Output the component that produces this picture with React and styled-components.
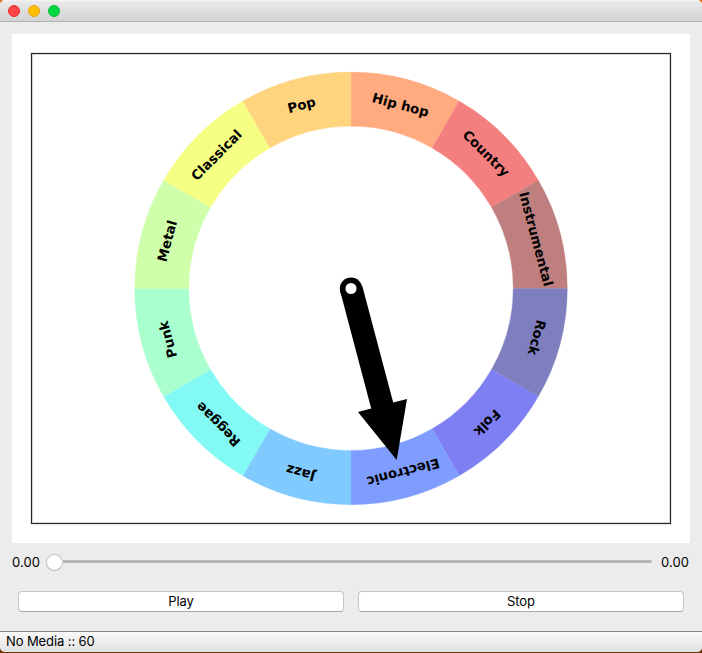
import React from 'react';
import styled, { createGlobalStyle } from 'styled-components';

const GlobalStyle = createGlobalStyle`
  * { box-sizing: border-box; }
  body { margin: 0; background: linear-gradient(#e8640a 0 50%, #6b3300 50%); }
`;

const Window = styled.div`
  width: 702px;
  height: 652px;
  margin-bottom: 1px;
  display: flex;
  flex-direction: column;
  overflow: hidden;
  border-radius: 5px;
  background: #ececec;
  color: #000;
  font-family: Inter, 'Liberation Sans', sans-serif;
  font-size: 13px;
  line-height: 16px;
`;

const TitleBar = styled.header`
  height: 22px;
  flex: none;
  display: flex;
  align-items: center;
  gap: 8px;
  padding-left: 8px;
  background: linear-gradient(#f4f4f4 0, #e9e9e9 2px, #d3d3d3 100%);
  border-bottom: 1px solid #b1b1b1;
`;

const WindowDot = styled.span`
  width: 12px;
  height: 12px;
  border-radius: 50%;
  background: ${(p) => p.$fill};
  border: 1px solid ${(p) => p.$edge};
`;

const Content = styled.main`
  flex: 1;
  display: flex;
  flex-direction: column;
  padding: 12px 12px 0;
`;

const Canvas = styled.section`
  height: 509px;
  padding: 19px;
  background: #fff;
`;

const PlotFrame = styled.div`
  width: 640px;
  height: 471px;
  border: 1px solid #262626;
  box-shadow: 0 0 0 1px #e4e8e5, inset 0 0 0 1px #d4d4d4;
`;

const Wheel = styled.svg`
  display: block;
  width: 638px;
  height: 469px;
`;

const Label = styled.text`
  font: bold 13.33px 'DejaVu Sans', sans-serif;
  text-anchor: middle;
`;

const SliderRow = styled.div`
  height: 38px;
  display: flex;
  align-items: center;
  justify-content: space-between;
`;

const Time = styled.span`
  width: 29px;
  letter-spacing: 0.1px;
  white-space: nowrap;
`;

const Track = styled.div`
  width: 606px;
  height: 17px;
  margin-right: 9px;
  margin-left: 5px;
  display: flex;
  align-items: center;
`;

const Thumb = styled.span`
  width: 17px;
  height: 17px;
  flex: none;
  border-radius: 50%;
  background: #fff;
  border: 1px solid #c3c3c3;
  border-bottom-color: #adadad;
`;

const Groove = styled.span`
  flex: 1;
  height: 3px;
  margin-bottom: 1px;
  border-radius: 0 2px 2px 0;
  background: #b7b7b7;
`;

const ButtonRow = styled.div`
  display: grid;
  grid-template-columns: 1fr 1fr;
  gap: 14px;
  padding: 10px 6px 0;
`;

const Button = styled.button`
  height: 21px;
  padding: 0 0 1px;
  border: 1px solid #c5c5c5;
  border-bottom-color: #a9a9a9;
  border-radius: 4px;
  background: #fff;
  color: #000;
  font: inherit;
  letter-spacing: -0.1px;
`;

const StatusBar = styled.footer`
  height: 21px;
  flex: none;
  display: flex;
  align-items: center;
  padding: 0 0 2px 6px;
  border-top: 1px solid #858585;
  background: linear-gradient(#fafafa, #e1e1e1);
  letter-spacing: -0.1px;
`;

const CX = 351;
const CY = 288.4;
const OUTER = 216.3;
const INNER = 162.2;

// Clockwise from the top; x and y are the centre of each rotated label.
const GENRES = [
  { name: 'Hip hop', color: '#ffaa7f', x: 400.6, y: 104.7 },
  { name: 'Country', color: '#f47f7f', x: 486.3, y: 153.3 },
  { name: 'Instrumental', color: '#bf7f7f', x: 536.2, y: 239 },
  { name: 'Rock', color: '#7f7fbf', x: 537, y: 337.6 },
  { name: 'Folk', color: '#7f7ff4', x: 487.3, y: 423 },
  { name: 'Electronic', color: '#7f9dff', x: 403.2, y: 472.5 },
  { name: 'Jazz', color: '#7fcaff', x: 300.5, y: 473 },
  { name: 'Reggae', color: '#83f9f6', x: 218, y: 424.5 },
  { name: 'Punk', color: '#aaffcf', x: 167.7, y: 339.5 },
  { name: 'Metal', color: '#cfffaa', x: 167, y: 241 },
  { name: 'Classical', color: '#f5ff83', x: 216.3, y: 155 },
  { name: 'Pop', color: '#ffd47f', x: 301.5, y: 104.8 },
];

const point = (radius, degrees) => {
  const a = (degrees * Math.PI) / 180;
  return `${(CX + radius * Math.sin(a)).toFixed(2)} ${(CY - radius * Math.cos(a)).toFixed(2)}`;
};

const segmentPath = (i) => {
  const a = i * 30;
  const b = a + 30;
  return `M${point(OUTER, a)}A${OUTER} ${OUTER} 0 0 1 ${point(OUTER, b)}L${point(INNER, b)}A${INNER} ${INNER} 0 0 0 ${point(INNER, a)}Z`;
};

const GenreWheel = () => (
  <Wheel viewBox="32 54 638 469">
    {GENRES.map((g, i) => (
      <path key={g.name} d={segmentPath(i)} fill={g.color} stroke={g.color} strokeWidth="0.3" />
    ))}
    {GENRES.map((g, i) => (
      <Label key={g.name} transform={`translate(${g.x} ${g.y}) rotate(${i * 30 + 15})`} y="4.8">
        {g.name}
      </Label>
    ))}
    <path d="M340.2 291.3L371.2 408.5L358 412L396.7 460L407 399L393.2 402.4L362.3 286Z" />
    <circle cx="351" cy="288.7" r="11.2" />
    <circle cx="351" cy="288.5" r="5.5" fill="#fff" />
  </Wheel>
);

export default function App() {
  return (
    <>
      <GlobalStyle />
      <Window>
        <TitleBar>
          <WindowDot $fill="#ff4545" $edge="#e8302f" />
          <WindowDot $fill="#ffbf05" $edge="#e3a21a" />
          <WindowDot $fill="#00d742" $edge="#0fb936" />
        </TitleBar>
        <Content>
          <Canvas>
            <PlotFrame>
              <GenreWheel />
            </PlotFrame>
          </Canvas>
          <SliderRow>
            <Time>0.00</Time>
            <Track>
              <Thumb />
              <Groove />
            </Track>
            <Time>0.00</Time>
          </SliderRow>
          <ButtonRow>
            <Button>Play</Button>
            <Button>Stop</Button>
          </ButtonRow>
        </Content>
        <StatusBar>No Media :: 60</StatusBar>
      </Window>
    </>
  );
}
